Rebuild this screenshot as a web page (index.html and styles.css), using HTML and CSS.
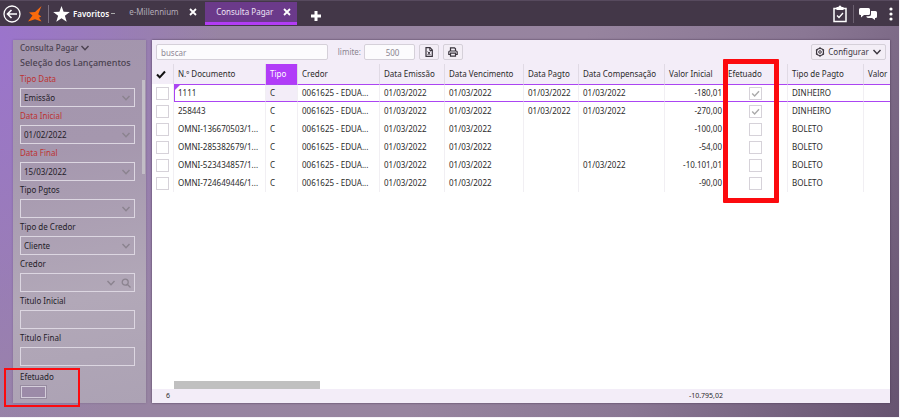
FILE: index.html
```html
<!DOCTYPE html>
<html lang="pt-BR">
<head>
<meta charset="utf-8">
<title>Consulta Pagar</title>
<link rel="stylesheet" href="styles.css">
</head>
<body>
<svg class="sprite" aria-hidden="true">
  <symbol id="chevron" viewBox="0 0 10 10"><path d="M1.5 3 5 6.7 8.5 3" fill="none" stroke="currentColor" stroke-width="1.4"/></symbol>
  <symbol id="close" viewBox="0 0 8 8"><path d="m1 1 6 6M7 1 1 7" stroke="currentColor" stroke-width="1.8"/></symbol>
</svg>
<div class="app">
  <header class="topbar">
    <button class="icon-btn back" aria-label="Voltar"><svg width="18" height="18" viewBox="0 0 18 18" fill="none" stroke="currentColor" stroke-width="1.3"><circle cx="9" cy="9" r="8"/><path d="M14 9H4.5M8.500 5 4.500 9l4 4" stroke-width="1.600"/></svg></button>
    <a class="logo" href="#" aria-label="Início"><svg width="14" height="16" viewBox="0 0 14 16"><path d="M13.500 0 10.200 8.200l3 2.300-2.200 1.300 2.500 3.700-6.500-2.300L0 15.500l4.500-6L1 6.500l6-.5z" fill="#f96a0c"/></svg></a>
    <button class="icon-btn favorites"><svg width="17" height="16" viewBox="0 0 17 16"><path d="m8.500 0 2.100 5.700 6.200.2-4.900 3.800 1.800 6-5.200-3.500-5.200 3.500 1.800-6L.2 5.900l6.200-.2z" fill="currentColor"/></svg><b>Favoritos</b><i class="caret"></i></button>
    <nav class="tabs">
      <div class="tab"><a href="#">e-Millennium</a><button class="icon-btn" aria-label="Fechar e-Millennium"><svg width="8" height="8"><use href="#close"/></svg></button></div>
      <div class="tab tab-active"><a href="#">Consulta Pagar</a><button class="icon-btn" aria-label="Fechar Consulta Pagar"><svg width="8" height="8"><use href="#close"/></svg></button></div>
    </nav>
    <button class="icon-btn add" aria-label="Nova aba"><svg width="10" height="10" viewBox="0 0 10 10"><path d="M5 0v10M0 5h10" stroke="currentColor" stroke-width="3"/></svg></button>
    <div class="actions">
      <button class="icon-btn" aria-label="Tarefas"><svg width="14" height="18" viewBox="0 0 14 18" fill="none" stroke="currentColor"><path d="M1 3.500h12v13H1z" stroke-width="1.500"/><path d="M3.500 2h2a1.500 1.500 0 0 1 3 0h2v3h-7z" fill="currentColor" stroke="none"/><path d="m4 10.500 2 2 4-4.500" stroke-width="1.300"/></svg></button>
      <button class="icon-btn chat" aria-label="Mensagens"><svg width="18" height="14" viewBox="0 0 18 14" fill="currentColor"><path d="M1.500 1h8q1.500 0 1.500 1.500v4Q11 8 9.500 8H5L2 10.500V8h-.5Q0 8 0 6.500v-4Q0 1 1.500 1z"/><path d="M12 4h4.500Q18 4 18 5.500v4q0 1.500-1.500 1.500H16v2l-3-2H9Q7.500 11 7.300 9.200H10q2 0 2-2z"/></svg></button>
      <button class="icon-btn" aria-label="Mais opções"><svg width="4" height="14" viewBox="0 0 4 14" fill="currentColor"><circle cx="2" cy="2" r="1.600"/><circle cx="2" cy="7" r="1.600"/><circle cx="2" cy="12" r="1.600"/></svg></button>
    </div>
  </header>

  <div class="workspace">
    <aside class="filters">
      <h1>Consulta Pagar <svg width="10" height="10"><use href="#chevron"/></svg></h1>
      <h2>Seleção dos Lançamentos</h2>
      <form>
        <div class="field required"><label for="tipo-data">Tipo Data</label><div class="control"><select id="tipo-data"><option>Emissão</option></select><svg width="10" height="10"><use href="#chevron"/></svg></div></div>
        <div class="field required"><label for="data-ini">Data Inicial</label><div class="control"><select id="data-ini"><option>01/02/2022</option></select><svg width="10" height="10"><use href="#chevron"/></svg></div></div>
        <div class="field required"><label for="data-fim">Data Final</label><div class="control"><select id="data-fim"><option>15/03/2022</option></select><svg width="10" height="10"><use href="#chevron"/></svg></div></div>
        <div class="field"><label for="pgtos">Tipo Pgtos</label><div class="control"><select id="pgtos"><option></option></select><svg width="10" height="10"><use href="#chevron"/></svg></div></div>
        <div class="field"><label for="tipo-credor">Tipo de Credor</label><div class="control"><select id="tipo-credor"><option>Cliente</option></select><svg width="10" height="10"><use href="#chevron"/></svg></div></div>
        <div class="field"><label for="credor">Credor</label><div class="control"><input type="text" id="credor"><svg width="10" height="10"><use href="#chevron"/></svg><svg width="10" height="10" viewBox="0 0 10 10" fill="none" stroke="currentColor" stroke-width="1.300"><circle cx="4.200" cy="4.200" r="3"/><path d="m6.500 6.500 3 3"/></svg></div></div>
        <div class="field"><label for="tit-ini">Titulo Inicial</label><div class="control"><input type="text" id="tit-ini"></div></div>
        <div class="field"><label for="tit-fim">Titulo Final</label><div class="control"><input type="text" id="tit-fim"></div></div>
        <div class="field field-check"><label for="efetuado">Efetuado</label><input type="checkbox" id="efetuado"><div class="mark mark-filter"></div></div>
      </form>
      <div class="filters-scroll"></div>
    </aside>

    <main class="panel">
      <div class="toolbar">
        <input class="search" type="text" placeholder="buscar" aria-label="buscar">
        <label for="limite">limite:</label>
        <input class="limit" type="text" id="limite" value="500">
        <button class="tool" aria-label="Exportar"><svg width="10" height="10" viewBox="0 0 10 10" fill="none" stroke="currentColor"><path d="M2 .7h4L8.300 3v6.300H2z" stroke-width="1.200"/><path d="M5.800.5v3h2.500" /><path d="m3.700 4.500 2.600 3.500M6.300 4.500 3.700 8"/></svg></button>
        <button class="tool" aria-label="Imprimir"><svg width="10" height="10" viewBox="0 0 10 10" fill="none" stroke="currentColor" stroke-width="1.200"><path d="M2.500 4V.8h4l1 1V4M2.500 7.500H.8V5q0-1 1-1h6.400q1 0 1 1v2.500H7.500"/><path d="M2.500 6.200h5v3h-5z"/></svg></button>
        <button class="tool config"><svg width="10" height="10" viewBox="0 0 10 10" fill="none" stroke="currentColor"><circle cx="5" cy="5" r="3.500" stroke-width="1.200"/><circle cx="5" cy="5" r="1.300"/><path d="M5 .3v1.200M5 8.500v1.200M1 2.600l1 .7M8 6.700l1 .7M1 7.400l1-.7M8 3.300l1-.7" stroke-width="1.400"/></svg>Configurar<svg width="10" height="10"><use href="#chevron"/></svg></button>
      </div>
      <div class="grid">
        <table>
          <colgroup><col class="c-check"><col class="c-doc"><col class="c-tipo"><col class="c-credor"><col class="c-emissao"><col class="c-venc"><col class="c-pagto"><col class="c-comp"><col class="c-valor"><col class="c-efet"><col class="c-forma"><col></colgroup>
          <thead><tr><th aria-label="Selecionar"><svg width="10" height="9" viewBox="0 0 10 9"><path d="m1 4.500 2.700 2.800L9 1.500" fill="none" stroke="#111" stroke-width="2"/></svg></th><th>N.º Documento</th><th class="sorted">Tipo</th><th>Credor</th><th>Data Emissão</th><th>Data Vencimento</th><th>Data Pagto</th><th>Data Compensação</th><th>Valor Inicial</th><th>Efetuado</th><th>Tipo de Pagto</th><th>Valor</th></tr></thead>
          <tbody>
            <tr class="current"><td><input type="checkbox" aria-label="Selecionar 1111"></td><td>1111</td><td>C</td><td>0061625 - EDUA...</td><td>01/03/2022</td><td>01/03/2022</td><td>01/03/2022</td><td>01/03/2022</td><td class="num">-180,01</td><td class="mid"><input type="checkbox" checked aria-label="Efetuado"></td><td>DINHEIRO</td><td></td></tr>
            <tr><td><input type="checkbox" aria-label="Selecionar 258443"></td><td>258443</td><td>C</td><td>0061625 - EDUA...</td><td>01/03/2022</td><td>01/03/2022</td><td>01/03/2022</td><td>01/03/2022</td><td class="num">-270,00</td><td class="mid"><input type="checkbox" checked aria-label="Efetuado"></td><td>DINHEIRO</td><td></td></tr>
            <tr><td><input type="checkbox" aria-label="Selecionar OMNI-136670503"></td><td>OMNI-136670503/1...</td><td>C</td><td>0061625 - EDUA...</td><td>01/03/2022</td><td>01/03/2022</td><td></td><td></td><td class="num">-100,00</td><td class="mid"><input type="checkbox" aria-label="Efetuado"></td><td>BOLETO</td><td></td></tr>
            <tr><td><input type="checkbox" aria-label="Selecionar OMNI-285382679"></td><td>OMNI-285382679/1...</td><td>C</td><td>0061625 - EDUA...</td><td>01/03/2022</td><td>01/03/2022</td><td></td><td></td><td class="num">-54,00</td><td class="mid"><input type="checkbox" aria-label="Efetuado"></td><td>BOLETO</td><td></td></tr>
            <tr><td><input type="checkbox" aria-label="Selecionar OMNI-523434857"></td><td>OMNI-523434857/1...</td><td>C</td><td>0061625 - EDUA...</td><td>01/03/2022</td><td>01/03/2022</td><td></td><td>01/03/2022</td><td class="num">-10.101,01</td><td class="mid"><input type="checkbox" aria-label="Efetuado"></td><td>BOLETO</td><td></td></tr>
            <tr><td><input type="checkbox" aria-label="Selecionar OMNI-724649446"></td><td>OMNI-724649446/1...</td><td>C</td><td>0061625 - EDUA...</td><td>01/03/2022</td><td>01/03/2022</td><td></td><td></td><td class="num">-90,00</td><td class="mid"><input type="checkbox" aria-label="Efetuado"></td><td>BOLETO</td><td></td></tr>
          </tbody>
        </table>
        <div class="mark mark-column"></div>
      </div>
      <div class="hscroll"></div>
      <footer class="totals"><span class="count">6</span><span class="sum">-10.795,02</span></footer>
    </main>
  </div>
</div>
</body>
</html>
```

FILE: styles.css
```css
* { box-sizing: border-box; }
body {
  margin: 0;
  padding: 0 1px 1px 0;
  background: #f6f3f8;
  color: #2b2b2b;
  font: 8px/12px "Noto Sans", "Open Sans", sans-serif;
}
button, input, select { font: inherit; color: inherit; margin: 0; }
a { color: inherit; text-decoration: none; }
svg { display: block; flex: none; }
.sprite { position: absolute; width: 0; height: 0; }

.app {
  display: flex;
  flex-direction: column;
  min-height: calc(100vh - 1px);
  background:
    radial-gradient(ellipse 220px 420px at 0 10%, #9b74cc 0%, #9b74cc00 100%),
    linear-gradient(115deg, #9884a6 0%, #97849f 55%, #8a7794 75%, #665370 100%);
}

/* Top bar */
.topbar {
  display: flex;
  align-items: center;
  height: 26px;
  padding: 0 6px 0 3px;
  background: #433748;
  border-top: 1px solid #574a5e;
  color: #fff;
}
.icon-btn {
  display: flex;
  align-items: center;
  padding: 0;
  border: 0;
  background: none;
  color: #fff;
}
.logo { margin-left: 7px; }
.favorites {
  gap: 3px;
  height: 18px;
  margin-left: 6px;
  padding-left: 4px;
  border-left: 1px solid #7b7080;
}
.favorites b { font-weight: 600; }
.caret { width: 4px; height: 1px; margin-left: -1px; background: #aaa; }
.tabs { display: flex; align-self: stretch; margin-left: 4px; }
.tab {
  display: flex;
  align-items: center;
  justify-content: space-between;
  min-width: 86px;
  margin: 1px 0;
  padding: 0 8px 3px 10px;
  color: #b3abb8;
}
.tab-active {
  min-width: 92px;
  padding: 0 6px 0 11px;
  background: #6b3a8a;
  border-bottom: 3px solid #b23cf5;
  color: #eee4f5;
}
.add { margin: 5px 0 0 14px; }
.actions { display: flex; align-items: center; gap: 6px; margin-left: auto; }
.chat { padding: 2px 6px 2px 5px; border-left: 1px solid #6b6070; }

.workspace {
  display: flex;
  flex: 1;
  gap: 6px;
  padding: 14px 9px 14px 13px;
}

/* Filters */
.filters {
  position: relative;
  width: 133px;
  padding: 1px 11px 0 7px;
  background: linear-gradient(170deg, #a395ad 0%, #a597ae 30%, #b2a8b8 70%, #aca2b4 100%);
  box-shadow: 0 0 2px #5d4c6866;
}
.filters h1, .filters h2 { margin: 0; font-weight: 500; color: #4b4250; }
.filters h1 { display: flex; align-items: center; gap: 2px; height: 14px; font-size: 8px; }
.filters h2 { height: 15px; font-size: 9px; line-height: 15px; white-space: nowrap; }
.field label { display: block; height: 18px; line-height: 18px; color: #242028; }
.required label { color: #bd3230; }
.control {
  display: flex;
  align-items: center;
  gap: 5px;
  height: 19px;
  padding-right: 3px;
  border: 1px solid #dcd6e1;
  color: #8b838f;
}
.control select, .control input {
  flex: 1;
  width: 0;
  height: 16px;
  padding: 0 3px;
  border: 0;
  appearance: none;
  background: none;
  color: #242028;
}
.field-check { position: relative; }
.field-check label { height: 20px; line-height: 22px; }
.field-check input {
  display: block;
  appearance: none;
  width: 25px;
  height: 12px;
  margin-left: 1px;
  border: 1px solid #d5cedb;
  outline: 1px solid #978ba0;
  background: #9c8ba8;
}
.filters-scroll {
  position: absolute;
  top: 40px;
  right: 1px;
  width: 3px;
  height: 94px;
  background: #c2bdc6;
}

/* Panel */
.panel {
  display: flex;
  flex: 1;
  flex-direction: column;
  min-width: 0;
  background: #fff;
  box-shadow: 0 0 2px #4b3a55;
}
.toolbar {
  display: flex;
  align-items: center;
  height: 24px;
  padding: 0 4px;
  background: #f3edf8;
  color: #8a8490;
}
.toolbar input, .tool {
  height: 16px;
  border: 1px solid #d5d0d9;
  border-radius: 2px;
  background: #fcfbfd;
}
.search { width: 172px; padding: 0 4px; }
.search::placeholder { color: #8f8795; }
.toolbar label { width: 36px; padding-right: 3px; text-align: right; }
.toolbar .limit { width: 51px; padding: 0 0 0 6px; text-align: center; }
.tool {
  display: flex;
  align-items: center;
  justify-content: center;
  width: 20px;
  margin-left: 4px;
  padding: 0;
  background: #f3eef6;
  color: #39343d;
}
.tool.config { width: 75px; gap: 3px; margin-left: auto; }

.grid { position: relative; flex: 1; }
table { width: 100%; table-layout: fixed; border-collapse: separate; border-spacing: 0; }
.c-check { width: 22px; }
.c-doc { width: 92px; }
.c-tipo { width: 32px; }
.c-credor { width: 82px; }
.c-emissao { width: 65px; }
.c-venc { width: 79px; }
.c-pagto { width: 55px; }
.c-comp { width: 86px; }
.c-valor { width: 59px; }
.c-efet { width: 64px; }
.c-forma { width: 76px; }
th, td {
  height: 18px;
  padding: 0 0 0 4px;
  overflow: hidden;
  text-align: left;
  white-space: nowrap;
  font-weight: 400;
}
th { height: 20px; background: #f3edf8; border-right: 1px solid #e0dae5; }
td { border-right: 1px solid #f1eff3; }
th:last-child, td:last-child { border-right: 0; }
th.sorted { background: #b13cf8; color: #fff; }
.current td:nth-child(n+2) { border-top: 1px solid #ab45f2; border-bottom: 1px solid #ab45f2; }
.current td:nth-child(2) {
  border-left: 1px solid #ab45f2;
  padding-left: 3px;
  background: linear-gradient(135deg, #ab45f2 3px, #ab45f200 4px);
}
.current td:nth-child(3) { background: #f3edf8; }
td.num { padding: 0 1px 0 0; text-align: right; }
td.mid { padding: 0; text-align: center; }
td input {
  display: block;
  appearance: none;
  width: 13px;
  height: 13px;
  border: 1px solid #d6d2d9;
  background: #fff;
}
td.mid input { margin: 0 auto; }
td input:checked {
  background: #fff url("data:image/svg+xml,%3Csvg xmlns='http://www.w3.org/2000/svg' viewBox='0 0 10 10'%3E%3Cpath d='m2 5 2.200 2.200L8.200 3' fill='none' stroke='%23aaa' stroke-width='1.300'/%3E%3C/svg%3E");
}
.hscroll { width: 146px; height: 8px; margin-left: 22px; background: #c0c0c0; }
.totals {
  display: flex;
  height: 14px;
  padding-left: 14px;
  background: #f3edf8;
  font-size: 7px;
  line-height: 14px;
}
.sum { margin-left: auto; padding-right: 167px; }

/* Highlight frames */
.mark { position: absolute; border: 2px solid #fc0a0e; pointer-events: none; }
.mark-filter { top: 2px; left: -16px; width: 76px; height: 39px; }
.mark-column { top: -5px; left: 571px; width: 56px; height: 144px; border-width: 5px; border-radius: 1px; }
```
